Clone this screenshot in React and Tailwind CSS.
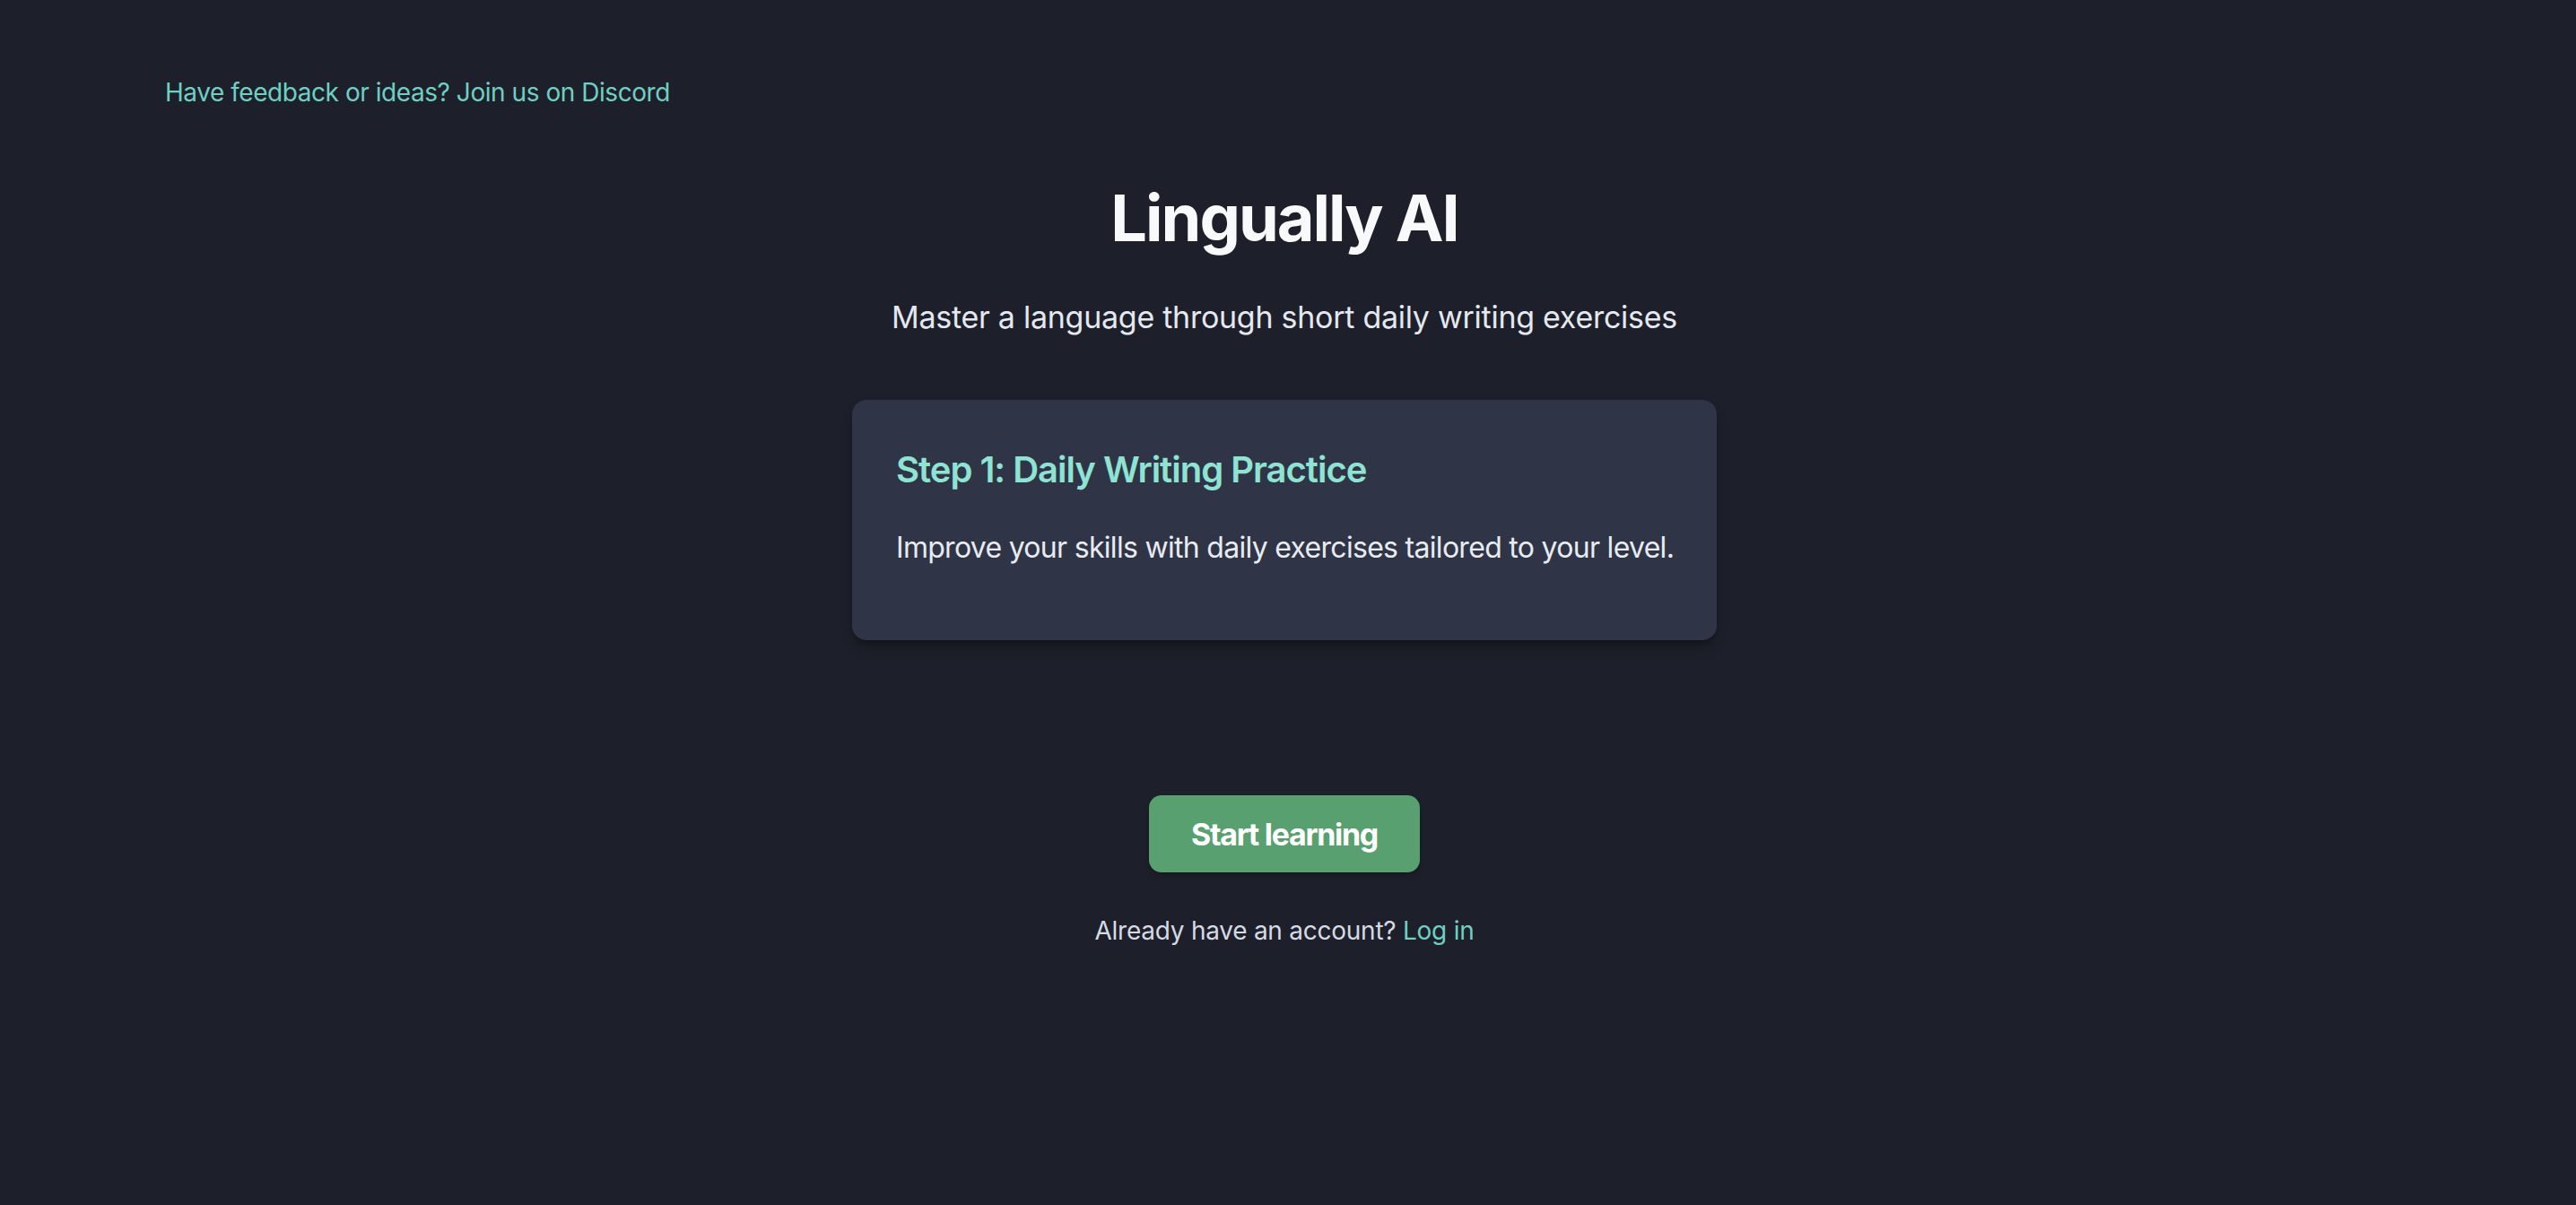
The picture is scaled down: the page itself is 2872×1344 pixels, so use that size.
import React from 'react';

const font = { fontFamily: 'Inter, "Noto Sans", sans-serif' };

let App = () => {
  return (
    <div
      className="min-h-screen w-full bg-[#1d202a] pr-[8px] pb-[200px]"
      style={font}
    >
      <div className="pl-[184px] pt-[89px]">
        <a
          href="#"
          className="text-[28px] leading-none tracking-[-0.45px] text-[#6fcfc2]"
        >
          Have feedback or ideas? Join us on Discord
        </a>
      </div>

      <div className="flex flex-col items-center">
        <h1 className="mt-[88px] text-[72px] leading-none font-bold text-[#f8f9fb] tracking-[-2px]">
          Lingually AI
        </h1>
        <p className="mt-[58px] text-[34px] leading-none tracking-[-0.27px] text-[#e5e8ef]">
          Master a language through short daily writing exercises
        </p>

        <div className="mt-[75px] w-[964px] rounded-[16px] bg-[#2f3546] px-[49px] pt-[58px] pb-[87px] shadow-lg shadow-black/30">
          <h2 className="text-[40px] leading-none font-semibold tracking-[-1px] text-[#8fe3d3]">
            Step 1: Daily Writing Practice
          </h2>
          <p className="mt-[51px] whitespace-nowrap text-[32px] leading-none tracking-[-0.7px] text-[#e8ebf2]">
            Improve your skills with daily exercises tailored to your level.
          </p>
        </div>

        <button className="mt-[173px] flex h-[86px] w-[302px] items-center justify-center rounded-[14px] bg-[#58a06f] text-[34px] font-bold tracking-[-1.3px] text-white shadow-md shadow-black/20">
          Start learning
        </button>

        <p className="mt-[51px] text-[28px] leading-none tracking-[-0.25px] text-[#d5dae3]">
          Already have an account?{' '}
          <a href="#" className="text-[#6fcfc2]">
            Log in
          </a>
        </p>
      </div>
    </div>
  );
};

export default App;
